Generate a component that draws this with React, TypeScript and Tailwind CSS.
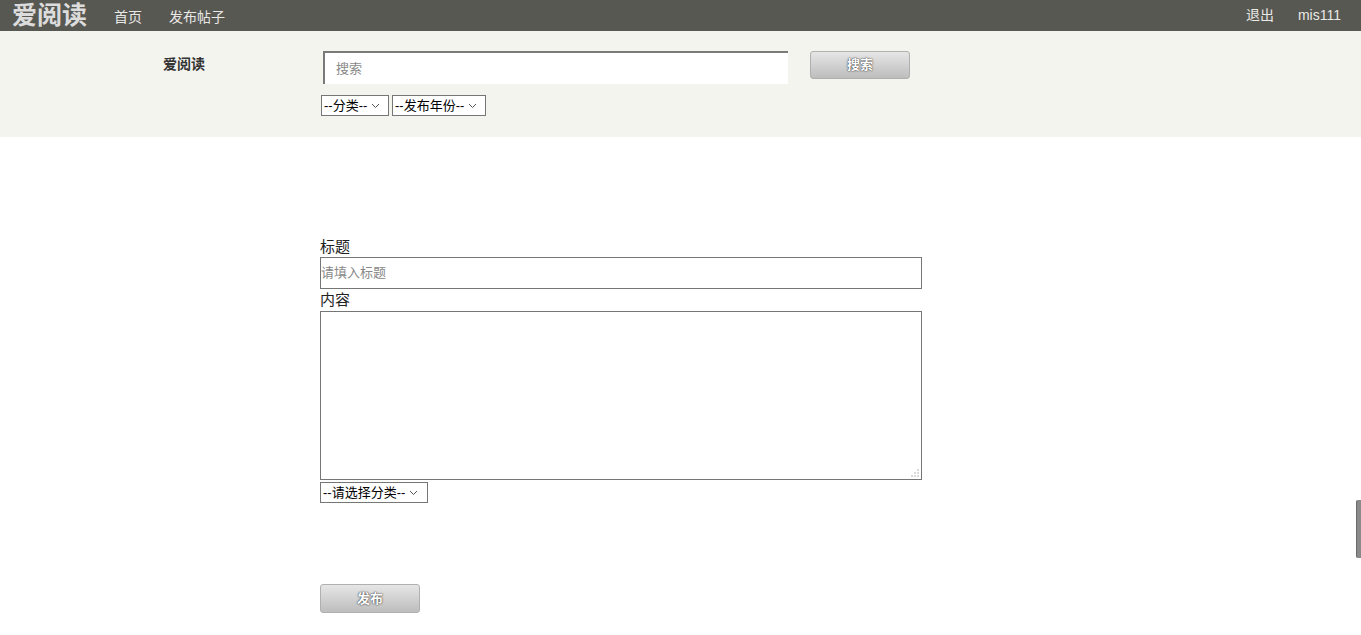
import * as React from "react";

const font = { fontFamily: '"Liberation Sans", "Noto Sans CJK SC", sans-serif' };

const Chevron = () => (
    <svg width="9" height="6" viewBox="0 0 9 6" className="ml-1 shrink-0">
        <path d="M1 1 L4.5 4.5 L8 1" fill="none" stroke="#555" strokeWidth="1" />
    </svg>
);

const FakeSelect = ({ label, className }: { label: string; className: string }) => (
    <div
        className={`flex items-center h-[21px] border border-[#767676] bg-white pl-[2px] pr-[4px] text-[13px] text-black leading-none ${className}`}
    >
        <span>{label}</span>
        <Chevron />
    </div>
);

const GrayButton = ({ label, className }: { label: string; className: string }) => (
    <button
        className={`flex items-center justify-center rounded-[3px] border border-[#b0b0b0] bg-gradient-to-b from-[#e6e6e6] to-[#bdbdbd] text-[13px] font-bold text-white [text-shadow:0_0_2px_#444,0_0_1px_#444] ${className}`}
    >
        {label}
    </button>
);

export default function App() {
    return (
        <div className="min-h-[635px] bg-white relative" style={font}>
            {/* top nav */}
            <nav className="h-[31px] bg-[#585853] flex items-center px-3 text-[#e8e8e6]">
                <span className="text-[25px] font-bold text-[#dcdcdc]">爱阅读</span>
                <a className="ml-[27px] mt-[3px] text-[14px]">首页</a>
                <a className="ml-[27px] mt-[3px] text-[14px]">发布帖子</a>
                <div className="ml-auto flex items-center gap-6 mr-[8px] text-[14px]">
                    <a>退出</a>
                    <a>mis111</a>
                </div>
            </nav>

            {/* search header */}
            <header className="h-[106px] bg-[#f4f4ef] flex pt-[20px]">
                <div className="w-[323px] pl-[163px] pt-[3px] text-[14px] font-bold text-[#333]">爱阅读</div>
                <div className="flex flex-col">
                    <div className="flex items-start">
                        <div className="w-[465px] h-[33px] bg-white border-t-2 border-l-2 border-[#7a7a7a] flex items-center pl-[11px] text-[13px] text-[#8a8a8a]">
                            搜索
                        </div>
                        <GrayButton label="搜索" className="ml-[22px] w-[100px] h-[28px]" />
                    </div>
                    <div className="flex gap-[3px] mt-[11px] -ml-[2px]">
                        <FakeSelect label="--分类--" className="w-[68px]" />
                        <FakeSelect label="--发布年份--" className="w-[94px]" />
                    </div>
                </div>
            </header>

            {/* post form */}
            <main className="pl-[320px] pt-[100px]">
                <div className="w-[602px] flex flex-col">
                    <label className="text-[15px] text-[#222] leading-[20px]">标题</label>
                    <div className="h-[32px] border border-[#767676] flex items-center text-[13px] text-[#888]">
                        请填入标题
                    </div>
                    <label className="text-[15px] text-[#222] leading-[22px]">内容</label>
                    <div className="h-[169px] border border-[#767676] bg-white relative">
                        <svg width="8" height="8" viewBox="0 0 8 8" className="absolute right-[2px] bottom-[2px]">
                            <circle cx="7" cy="1" r="0.7" fill="#999" />
                            <circle cx="7" cy="4" r="0.7" fill="#999" />
                            <circle cx="4" cy="4" r="0.7" fill="#999" />
                            <circle cx="7" cy="7" r="0.7" fill="#999" />
                            <circle cx="4" cy="7" r="0.7" fill="#999" />
                            <circle cx="1" cy="7" r="0.7" fill="#999" />
                        </svg>
                    </div>
                    <FakeSelect label="--请选择分类--" className="w-[108px] mt-[2px]" />
                    <GrayButton label="发布" className="w-[100px] h-[29px] mt-[81px]" />
                </div>
            </main>

            {/* side tab */}
            <div className="absolute right-0 top-[500px] w-[5px] h-[58px] bg-[#8a8a8a] rounded-l-[2px] border-l border-[#6a6a6a]" />
        </div>
    );
}
